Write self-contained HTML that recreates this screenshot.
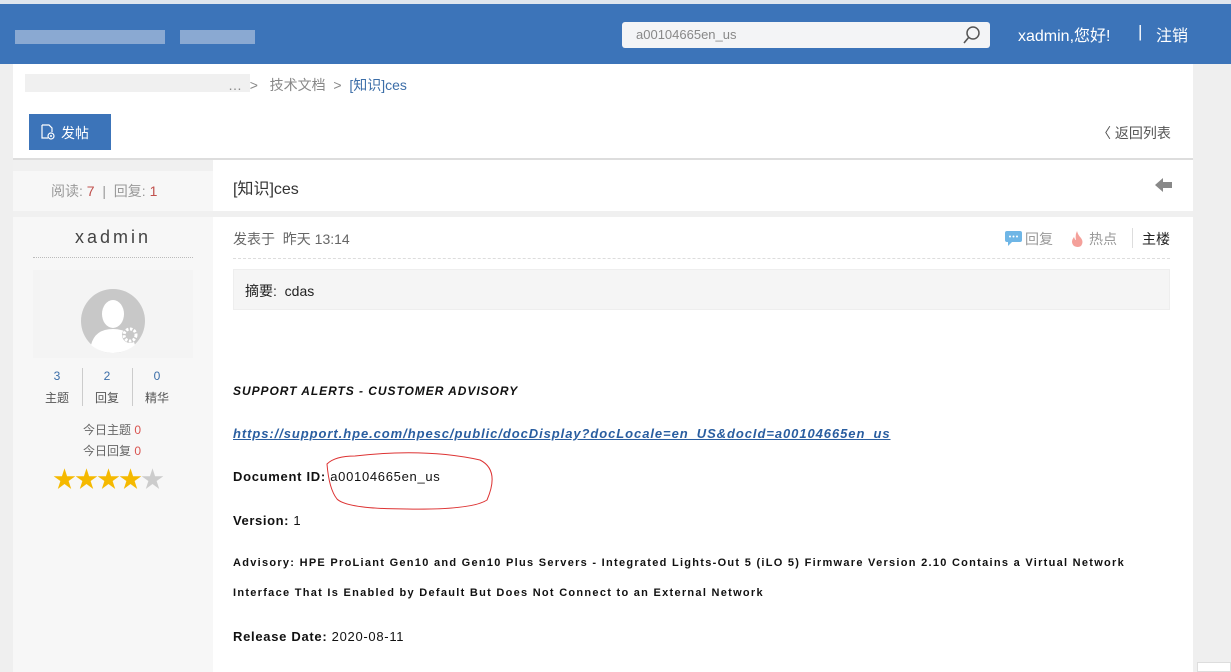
<!DOCTYPE html>
<html><head><meta charset="utf-8"><style>
*{margin:0;padding:0;box-sizing:border-box}
body{width:1231px;height:672px;overflow:hidden;background:#efefef;font-family:"Liberation Sans","Noto Sans CJK SC",sans-serif;position:relative}
.a{position:absolute}
.t{white-space:nowrap}
</style></head><body>
<div class="a" style="left:0;top:0;width:1231px;height:4px;background:#dfe6ee"></div>
<div class="a" style="left:0;top:4px;width:1231px;height:60px;background:#3c74b9"></div>
<div class="a" style="left:15px;top:30px;width:150px;height:14px;background:#9db6d8;opacity:.8"></div>
<div class="a" style="left:180px;top:30px;width:75px;height:14px;background:#9db6d8;opacity:.8"></div>
<div class="a" style="left:622px;top:22px;width:368px;height:26px;background:#f3f4f6;border-radius:3px"></div>
<div class="a t" style="left:636px;top:27px;font-size:13px;color:#888">a00104665en_us</div>
<svg class="a" style="left:961px;top:24px" width="22" height="22" viewBox="0 0 22 22"><circle cx="12" cy="9" r="6" fill="none" stroke="#555" stroke-width="1.5"/><path d="M8 13L3 19" stroke="#555" stroke-width="1.6"/></svg>
<div class="a t" style="left:1018px;top:22px;font-size:16px;color:#fff">xadmin,您好!</div>
<div class="a t" style="left:1138px;top:22px;font-size:17px;color:#fff">|</div>
<div class="a t" style="left:1156px;top:22px;font-size:16px;color:#fff">注销</div>
<div class="a" style="left:13px;top:64px;width:1180px;height:608px;background:#fff"></div>
<div class="a" style="left:25px;top:74px;width:225px;height:18px;background:#e9e9e9;opacity:.7"></div>
<div class="a t" style="left:228px;top:75px;font-size:14px;color:#888">… &nbsp;&gt; &nbsp; 技术文档 &nbsp;&gt; &nbsp;<span style="color:#3c6ea8">[知识]ces</span></div>
<div class="a" style="left:29px;top:114px;width:82px;height:36px;background:#3c74b9"></div>
<svg class="a" style="left:40px;top:124px" width="16" height="16" viewBox="0 0 16 16"><path d="M2 1h7l3 3v4M2 1v13h6" fill="none" stroke="#fff" stroke-width="1.2"/><circle cx="11" cy="12" r="3" fill="none" stroke="#fff" stroke-width="1.2"/><circle cx="11" cy="12" r="1" fill="#fff"/></svg>
<div class="a t" style="left:61px;top:123px;font-size:14px;color:#fff">发帖</div>
<div class="a t" style="left:1097px;top:123px;font-size:14px;color:#555">〈 返回列表</div>
<div class="a" style="left:13px;top:158px;width:1180px;height:2px;background:#ddd"></div>
<div class="a" style="left:13px;top:160px;width:1180px;height:57px;background:#f0f0f0"></div>
<div class="a" style="left:13px;top:171px;width:200px;height:40px;background:#f7f7f7"></div>
<div class="a" style="left:213px;top:160px;width:980px;height:51px;background:#fff"></div>
<div class="a t" style="left:51px;top:181px;font-size:14px;color:#999">阅读: <span style="color:#c0504d">7</span> &nbsp;| &nbsp;回复: <span style="color:#c0504d">1</span></div>
<div class="a t" style="left:233px;top:175px;font-size:16px;color:#333">[知识]ces</div>
<svg class="a" style="left:1155px;top:178px" width="18" height="14" viewBox="0 0 18 14"><path d="M0 7L8 0v4h9v6H8v4z" fill="#888"/></svg>
<div class="a" style="left:13px;top:217px;width:200px;height:455px;background:#f7f7f7"></div>
<div class="a" style="left:213px;top:217px;width:980px;height:455px;background:#fff"></div>
<div class="a t" style="left:13px;top:227px;width:200px;text-align:center;font-size:18px;letter-spacing:3px;color:#444">xadmin</div>
<div class="a" style="left:33px;top:257px;width:160px;border-top:1px dotted #bbb"></div>
<div class="a" style="left:33px;top:270px;width:160px;height:88px;background:#f4f4f4"></div>
<svg class="a" style="left:81px;top:289px" width="64" height="64" viewBox="0 0 64 64"><circle cx="32" cy="32" r="32" fill="#c8c8c8"/><ellipse cx="32" cy="25" rx="11" ry="14" fill="#fff"/><path d="M10 56q4-16 22-16q18 0 22 16q-10 8-22 8q-12 0-22-8z" fill="#fff"/><circle cx="49" cy="46" r="8" fill="#c8c8c8"/><circle cx="49" cy="46" r="6" fill="none" stroke="#fff" stroke-width="3" stroke-dasharray="2.5 1.5"/><circle cx="49" cy="46" r="2" fill="#c8c8c8"/></svg>
<div class="a t" style="left:41px;top:369px;width:32px;text-align:center;font-size:12px;color:#3c6ea8">3</div>
<div class="a t" style="left:41px;top:389px;width:32px;text-align:center;font-size:12px;color:#555">主题</div>
<div class="a" style="left:82px;top:368px;width:1px;height:38px;background:#ccc"></div>
<div class="a t" style="left:91px;top:369px;width:32px;text-align:center;font-size:12px;color:#3c6ea8">2</div>
<div class="a t" style="left:91px;top:389px;width:32px;text-align:center;font-size:12px;color:#555">回复</div>
<div class="a" style="left:132px;top:368px;width:1px;height:38px;background:#ccc"></div>
<div class="a t" style="left:141px;top:369px;width:32px;text-align:center;font-size:12px;color:#3c6ea8">0</div>
<div class="a t" style="left:141px;top:389px;width:32px;text-align:center;font-size:12px;color:#555">精华</div>
<div class="a t" style="left:83px;top:421px;font-size:12px;color:#666">今日主题 <span style="color:#d9534f">0</span></div>
<div class="a t" style="left:83px;top:442px;font-size:12px;color:#666">今日回复 <span style="color:#d9534f">0</span></div>
<div class="a t" style="left:53px;top:460px;font-size:23px;letter-spacing:-1px;color:#f5b900">★★★★<span style="color:#ccc">★</span></div>
<div class="a t" style="left:233px;top:229px;font-size:14px;color:#666">发表于 &nbsp;昨天 13:14</div>
<svg class="a" style="left:1005px;top:231px" width="17" height="15" viewBox="0 0 17 15"><rect x="0" y="0" width="17" height="11" rx="2" fill="#6fb6e6"/><path d="M3 10v5l5-5z" fill="#6fb6e6"/><circle cx="5" cy="5.5" r="1" fill="#fff"/><circle cx="8.5" cy="5.5" r="1" fill="#fff"/><circle cx="12" cy="5.5" r="1" fill="#fff"/></svg>
<div class="a t" style="left:1025px;top:229px;font-size:14px;color:#999">回复</div>
<svg class="a" style="left:1071px;top:231px" width="13" height="16" viewBox="0 0 13 16"><path d="M6 0q1 4 4 7q3 4 0 8q-3 2-7 0q-4-4 0-9q1 3 2 3q-1-5 1-9z" fill="#f4a09a"/></svg>
<div class="a t" style="left:1089px;top:229px;font-size:14px;color:#999">热点</div>
<div class="a" style="left:1132px;top:228px;width:1px;height:20px;background:#ddd"></div>
<div class="a t" style="left:1142px;top:229px;font-size:14px;color:#222">主楼</div>
<div class="a" style="left:233px;top:258px;width:937px;border-top:1px dashed #ddd"></div>
<div class="a" style="left:233px;top:269px;width:937px;height:41px;background:#f5f5f5;border:1px solid #eee"></div>
<div class="a t" style="left:245px;top:281px;font-size:14px;color:#222">摘要: &nbsp;cdas</div>
<div class="a t" style="left:233px;top:384px;font-size:12px;font-weight:bold;font-style:italic;letter-spacing:0.95px;color:#111">SUPPORT ALERTS - CUSTOMER ADVISORY</div>
<div class="a t" style="left:233px;top:426px;font-size:13px;font-weight:bold;font-style:italic;letter-spacing:0.93px;color:#2a5ea0;text-decoration:underline">https://support.hpe.com/hpesc/public/docDisplay?docLocale=en_US&amp;docId=a00104665en_us</div>
<div class="a t" style="left:233px;top:469px;font-size:13px;letter-spacing:0.7px;color:#111"><b>Document ID:</b> a00104665en_us</div>
<svg class="a" style="left:315px;top:448px" width="180" height="64" viewBox="0 0 180 64"><path d="M40 8q70-8 125 4q20 10 7 40q-15 10-80 9q-60 0-70-10q-8-10-10-35q8-8 28-8" fill="none" stroke="#d33" stroke-width="1"/></svg>
<div class="a t" style="left:233px;top:513px;font-size:13px;letter-spacing:0.6px;color:#111"><b>Version:</b> 1</div>
<div class="a t" style="left:233px;top:557px;font-size:11px;font-weight:bold;letter-spacing:1.28px;color:#111">Advisory: HPE ProLiant Gen10 and Gen10 Plus Servers - Integrated Lights-Out 5 (iLO 5) Firmware Version 2.10 Contains a Virtual Network</div>
<div class="a t" style="left:233px;top:587px;font-size:11px;font-weight:bold;letter-spacing:1.28px;color:#111">Interface That Is Enabled by Default But Does Not Connect to an External Network</div>
<div class="a t" style="left:233px;top:629px;font-size:13px;letter-spacing:0.7px;color:#111"><b>Release Date:</b> 2020-08-11</div>
<div class="a" style="left:1197px;top:662px;width:34px;height:10px;background:#fff;border:1px solid #ddd"></div>
</body></html>
